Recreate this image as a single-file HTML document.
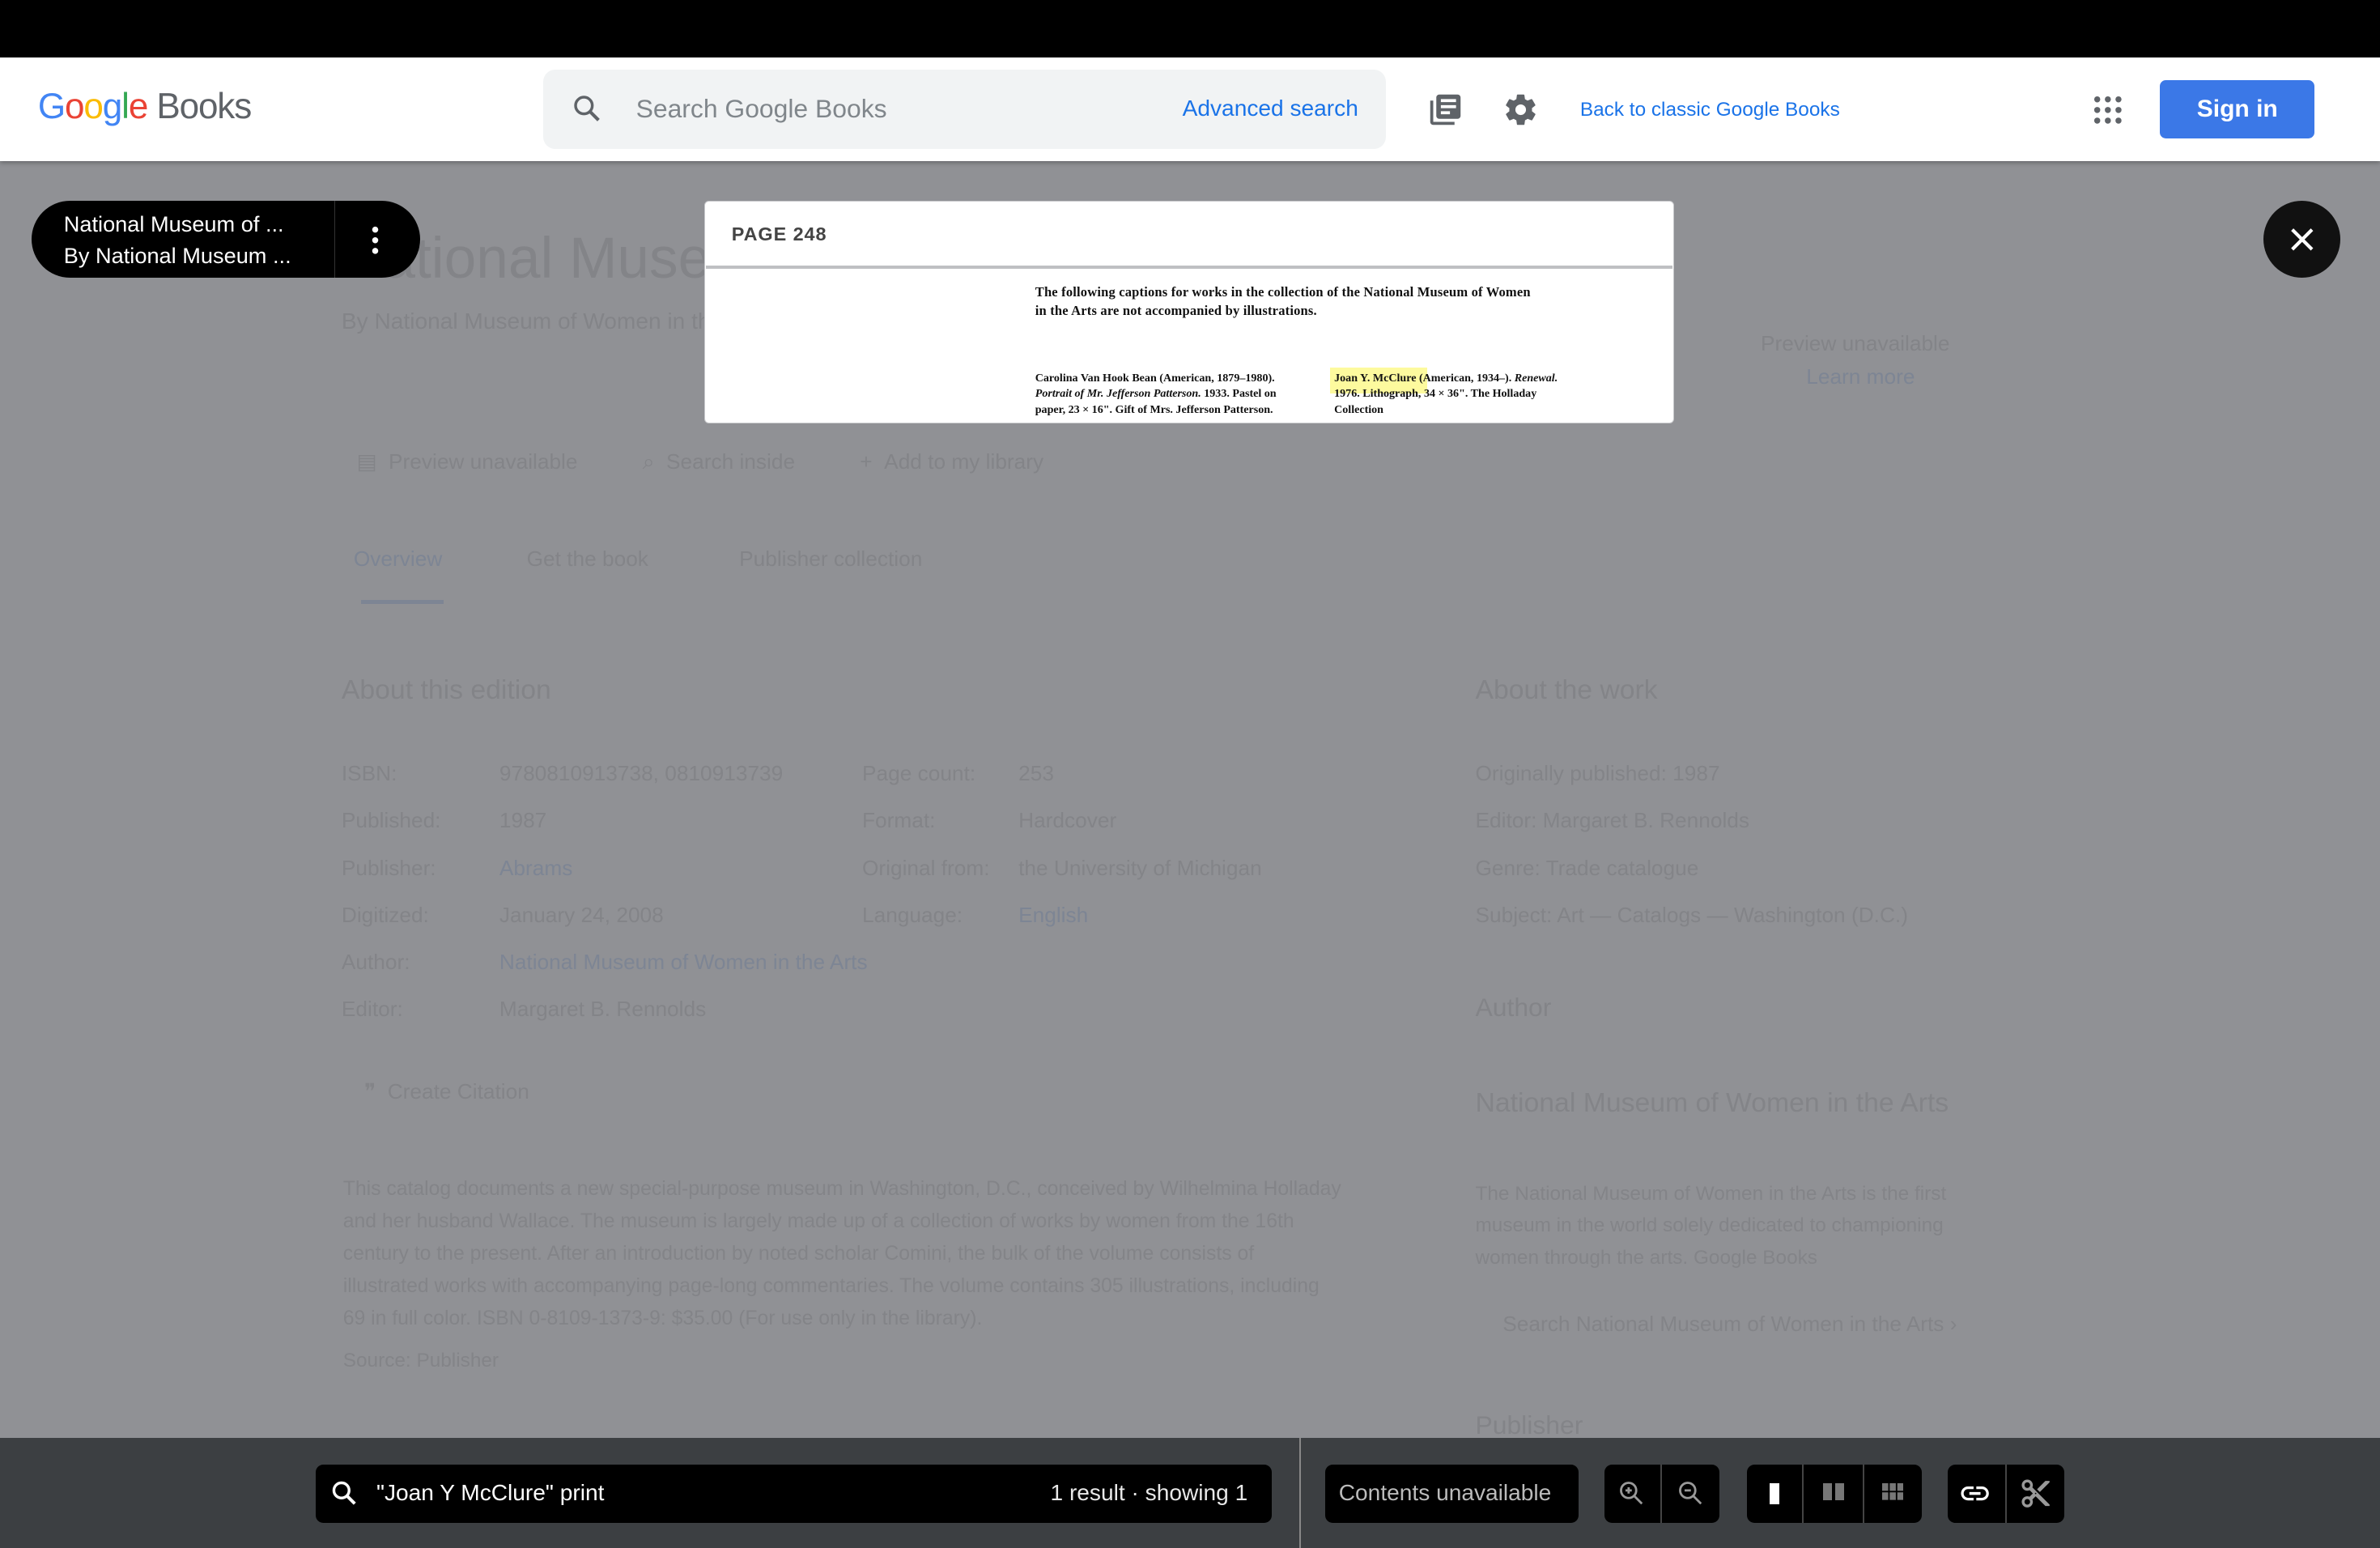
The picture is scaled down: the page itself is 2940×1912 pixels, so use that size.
<!DOCTYPE html>
<html><head><meta charset="utf-8"><style>
html,body{margin:0;padding:0;width:2940px;height:1912px;overflow:hidden;background:#909195}
#r{zoom:1.875;width:1568px;height:1020px;position:relative;font-family:"Liberation Sans",Arial,sans-serif}
.a{position:absolute;white-space:nowrap}
.bg{color:#838488}
.bl{color:#7d8594}
.pg{font-family:'Liberation Serif',serif;color:#111;font-weight:bold}
</style></head><body><div id="r">
<div class="a" style="left:0;top:0;width:1568px;height:38px;background:#000"></div>
<div class="a" style="left:0;top:38px;width:1568px;height:68px;background:#fff;box-shadow:0 1px 3px rgba(0,0,0,.3)"></div>
<div class="a" style="left:25px;top:57px;font-size:23.5px;letter-spacing:-0.6px"><span style="color:#4285f4">G</span><span style="color:#ea4335">o</span><span style="color:#fbbc05">o</span><span style="color:#4285f4">g</span><span style="color:#34a853">l</span><span style="color:#ea4335">e</span> <span style="color:#5f6368">Books</span></div>
<div class="a" style="left:358px;top:46px;width:555px;height:52px;background:#f1f3f4;border-radius:8px"></div>
<svg class="a" style="left:376px;top:61px" width="22" height="22" viewBox="0 0 24 24"><circle cx="9.5" cy="9.5" r="6" fill="none" stroke="#5f6368" stroke-width="2"/><path d="M14 14l6 6" stroke="#5f6368" stroke-width="2.4"/></svg>
<div class="a" style="left:419px;top:62px;font-size:17px;color:#80868b">Search Google Books</div>
<div class="a" style="left:779px;top:63px;font-size:15px;color:#1a73e8">Advanced search</div>
<svg class="a" style="left:940px;top:60px" width="24" height="24" viewBox="0 0 24 24"><path d="M4 6H2v14c0 1.1.9 2 2 2h14v-2H4V6zm16-4H8c-1.1 0-2 .9-2 2v12c0 1.1.9 2 2 2h12c1.1 0 2-.9 2-2V4c0-1.1-.9-2-2-2zm-1 9H9V9h10v2zm-4 4H9v-2h6v2zm4-8H9V5h10v2z" fill="#5f6368"/></svg>
<svg class="a" style="left:990px;top:60px" width="24" height="24" viewBox="0 0 24 24"><path d="M19.4 13c.04-.32.06-.66.06-1s-.02-.68-.07-1l2.1-1.650c.2-.15.24-.42.12-.64l-2-3.46c-.12-.22-.39-.3-.61-.22l-2.49 1c-.52-.4-1.080-.73-1.69-.98l-.38-2.65A.49.49 0 0 0 14 2h-4c-.25 0-.46.18-.49.42l-.38 2.65c-.61.25-1.17.59-1.69.98l-2.49-1c-.23-.09-.49 0-.61.22l-2 3.46c-.13.22-.07.49.12.64L4.57 11c-.04.32-.07.66-.07 1s.02.68.07 1l-2.11 1.65c-.19.15-.24.42-.12.64l2 3.46c.12.22.39.3.61.22l2.49-1c.52.4 1.08.73 1.69.98l.38 2.65c.03.24.24.42.49.42h4c.25 0 .46-.18.49-.42l.38-2.65c.61-.25 1.17-.59 1.69-.98l2.49 1c.23.09.49 0 .61-.22l2-3.46c.12-.22.07-.49-.12-.64L19.4 13zM12 15.5A3.5 3.5 0 1 1 12 8.5a3.5 3.5 0 0 1 0 7z" fill="#5f6368"/></svg>
<div class="a" style="left:1041px;top:65px;font-size:13px;color:#1a73e8">Back to classic Google Books</div>
<svg class="a" style="left:1379px;top:63px" width="19" height="19" viewBox="0 0 19 19" fill="#5f6368"><circle cx="2.5" cy="2.5" r="2"/><circle cx="9.5" cy="2.5" r="2"/><circle cx="16.5" cy="2.5" r="2"/><circle cx="2.5" cy="9.5" r="2"/><circle cx="9.5" cy="9.5" r="2"/><circle cx="16.5" cy="9.5" r="2"/><circle cx="2.5" cy="16.5" r="2"/><circle cx="9.5" cy="16.5" r="2"/><circle cx="16.5" cy="16.5" r="2"/></svg>
<div class="a" style="left:1423px;top:53px;width:102px;height:38px;background:#3b78e7;border-radius:4px;color:#fff;font-size:16px;font-weight:bold;text-align:center;line-height:38px">Sign in</div>

<div class="a bg" style="left:225px;top:148px;font-size:38px">National Museum of Women in the Arts</div>
<div class="a bg" style="left:225px;top:203px;font-size:15px">By National Museum of Women in the Arts</div>
<div class="a bg" style="left:1160px;top:218px;font-size:14px">Preview unavailable</div>
<div class="a bl" style="left:1190px;top:240px;font-size:14px">Learn more</div>
<div class="a bg" style="left:235px;top:296px;font-size:14px">▤ &nbsp;Preview unavailable &nbsp;&nbsp;&nbsp;&nbsp;&nbsp;&nbsp;&nbsp;&nbsp;&nbsp; ⌕ &nbsp;Search inside &nbsp;&nbsp;&nbsp;&nbsp;&nbsp;&nbsp;&nbsp;&nbsp;&nbsp; + &nbsp;Add to my library</div>
<div class="a bl" style="left:233px;top:360px;font-size:14px">Overview</div>
<div class="a" style="left:238px;top:395px;width:54px;height:3px;background:#7d8594"></div>
<div class="a bg" style="left:347px;top:360px;font-size:14px">Get the book</div>
<div class="a bg" style="left:487px;top:360px;font-size:14px">Publisher collection</div>
<div class="a bg" style="left:225px;top:444px;font-size:18px">About this edition</div>
<div class="a bg" style="left:972px;top:444px;font-size:18px">About the work</div>
<div class="a bg" style="left:225px;top:494px;font-size:14px;line-height:31px">ISBN:<br>Published:<br>Publisher:<br>Digitized:<br>Author:<br>Editor:</div>
<div class="a bg" style="left:329px;top:494px;font-size:14px;line-height:31px">9780810913738, 0810913739<br>1987<br><span class="bl">Abrams</span><br>January 24, 2008<br><span class="bl">National Museum of Women in the Arts</span><br>Margaret B. Rennolds</div>
<div class="a bg" style="left:568px;top:494px;font-size:14px;line-height:31px">Page count:<br>Format:<br>Original from:<br>Language:</div>
<div class="a bg" style="left:671px;top:494px;font-size:14px;line-height:31px">253<br>Hardcover<br>the University of Michigan<br><span class="bl">English</span></div>
<div class="a bg" style="left:972px;top:494px;font-size:14px;line-height:31px">Originally published: 1987<br>Editor: Margaret B. Rennolds<br>Genre: Trade catalogue<br>Subject: Art — Catalogs — Washington (D.C.)</div>
<div class="a bg" style="left:240px;top:711px;font-size:14px">❞ &nbsp;Create Citation</div>
<div class="a bg" style="left:972px;top:654px;font-size:17px">Author</div>
<div class="a bg" style="left:972px;top:716px;font-size:18px">National Museum of Women in the Arts</div>
<div class="a bg" style="left:972px;top:776px;font-size:13px;line-height:21px">The National Museum of Women in the Arts is the first<br>museum in the world solely dedicated to championing<br>women through the arts. Google Books</div>
<div class="a bg" style="left:990px;top:864px;font-size:14px">Search National Museum of Women in the Arts ›</div>
<div class="a bg" style="left:972px;top:929px;font-size:17px">Publisher</div>
<div class="a bg" style="left:226px;top:773px;font-size:13.2px;line-height:21.3px">This catalog documents a new special-purpose museum in Washington, D.C., conceived by Wilhelmina Holladay<br>and her husband Wallace. The museum is largely made up of a collection of works by women from the 16th<br>century to the present. After an introduction by noted scholar Comini, the bulk of the volume consists of<br>illustrated works with accompanying page-long commentaries. The volume contains 305 illustrations, including<br>69 in full color. ISBN 0-8109-1373-9: $35.00 (For use only in the library).</div>
<div class="a bg" style="left:226px;top:889px;font-size:13px">Source: Publisher</div>

<div class="a" style="left:21px;top:132px;width:256px;height:51px;background:#000;border-radius:26px"></div>
<div class="a" style="left:42px;top:137px;font-size:14.5px;color:#fff;line-height:21px">National Museum of ...<br>By National Museum ...</div>
<div class="a" style="left:220px;top:132px;width:1px;height:51px;background:#333"></div>
<svg class="a" style="left:243px;top:148px" width="8" height="20"><circle cx="4" cy="3" r="2" fill="#fff"/><circle cx="4" cy="10" r="2" fill="#fff"/><circle cx="4" cy="17" r="2" fill="#fff"/></svg>
<div class="a" style="left:1491px;top:132px;width:51px;height:51px;background:#111;border-radius:50%"></div>
<svg class="a" style="left:1507px;top:148px" width="19" height="19"><path d="M3 3l13 13M16 3L3 16" stroke="#fff" stroke-width="2.2"/></svg>

<div class="a" style="left:464px;top:132px;width:639px;height:147px;background:#fff;border:1px solid #c8c9cc;border-radius:3px;box-sizing:border-box"></div>
<div class="a" style="left:482px;top:147px;font-size:12.5px;font-weight:bold;color:#444;letter-spacing:0.5px">PAGE 248</div>
<div class="a" style="left:465px;top:175px;width:637px;height:2px;background:#bfc0c3"></div>
<div class="a pg" style="left:682px;top:186px;font-size:8.8px;line-height:12.5px;letter-spacing:0.1px">The following captions for works in the collection of the National Museum of Women<br>in the Arts are not accompanied by illustrations.</div>
<div class="a" style="left:876px;top:242px;width:64px;height:17px;background:#fdfa9e"></div>
<div class="a pg" style="left:682px;top:244px;font-size:7.5px;line-height:10.5px">Carolina Van Hook Bean (American, 1879–1980).<br><i>Portrait of Mr. Jefferson Patterson.</i> 1933. Pastel on<br>paper, 23 × 16". Gift of Mrs. Jefferson Patterson.</div>
<div class="a pg" style="left:879px;top:244px;font-size:7.5px;line-height:10.5px">Joan Y. McClure (American, 1934–). <i>Renewal.</i><br>1976. Lithograph, 34 × 36". The Holladay<br>Collection</div>

<div class="a" style="left:0;top:947px;width:1568px;height:73px;background:#3c3f42"></div>
<div class="a" style="left:856px;top:947px;width:1px;height:73px;background:#888"></div>
<div class="a" style="left:208px;top:965px;width:630px;height:38px;background:#000;border-radius:5px"></div>
<svg class="a" style="left:217px;top:974px" width="20" height="20" viewBox="0 0 24 24"><circle cx="9.5" cy="9.5" r="6" fill="none" stroke="#fff" stroke-width="2.2"/><path d="M14 14l6 6" stroke="#fff" stroke-width="2.6"/></svg>
<div class="a" style="left:248px;top:975px;font-size:15px;color:#fff">"Joan Y McClure" print</div>
<div class="a" style="left:692px;top:975px;font-size:15px;color:#e8e8e8">1 result · showing 1</div>
<div class="a" style="left:873px;top:965px;width:167px;height:38px;background:#000;border-radius:5px"></div>
<div class="a" style="left:882px;top:975px;font-size:15px;color:#bbb">Contents unavailable</div>
<div class="a" style="left:1057px;top:965px;width:76px;height:38px;background:#000;border-radius:5px"></div>
<div class="a" style="left:1094px;top:965px;width:1px;height:38px;background:#444"></div>
<svg class="a" style="left:1065px;top:974px" width="20" height="20" viewBox="0 0 24 24"><circle cx="9.5" cy="9.5" r="6" fill="none" stroke="#999" stroke-width="1.8"/><path d="M14 14l6 6M7 9.5h5M9.5 7v5" stroke="#999" stroke-width="1.8"/></svg>
<svg class="a" style="left:1104px;top:974px" width="20" height="20" viewBox="0 0 24 24"><circle cx="9.5" cy="9.5" r="6" fill="none" stroke="#999" stroke-width="1.8"/><path d="M14 14l6 6M7 9.5h5" stroke="#999" stroke-width="1.8"/></svg>
<div class="a" style="left:1151px;top:965px;width:115px;height:38px;background:#000;border-radius:5px"></div>
<div class="a" style="left:1187px;top:965px;width:1px;height:38px;background:#444"></div>
<div class="a" style="left:1227px;top:965px;width:1px;height:38px;background:#444"></div>
<div class="a" style="left:1166px;top:977px;width:6px;height:14px;background:#fff"></div>
<div class="a" style="left:1201px;top:977px;width:6px;height:11px;background:#777"></div><div class="a" style="left:1209px;top:977px;width:6px;height:11px;background:#777"></div>
<svg class="a" style="left:1240px;top:977px" width="14" height="12" fill="#777"><rect x="0" y="0" width="4" height="5"/><rect x="5" y="0" width="4" height="5"/><rect x="10" y="0" width="4" height="5"/><rect x="0" y="6" width="4" height="5"/><rect x="5" y="6" width="4" height="5"/><rect x="10" y="6" width="4" height="5"/></svg>
<div class="a" style="left:1283px;top:965px;width:77px;height:38px;background:#000;border-radius:5px"></div>
<div class="a" style="left:1321px;top:965px;width:1px;height:38px;background:#444"></div>
<svg class="a" style="left:1290px;top:973px" width="22" height="22" viewBox="0 0 24 24"><path d="M3.9 12c0-1.71 1.39-3.1 3.1-3.1h4V7H7c-2.76 0-5 2.24-5 5s2.24 5 5 5h4v-1.9H7c-1.710 0-3.1-1.39-3.1-3.1zM8 13h8v-2H8v2zm9-6h-4v1.9h4c1.71 0 3.1 1.39 3.1 3.1s-1.39 3.1-3.1 3.1h-4V17h4c2.76 0 5-2.240 5-5s-2.24-5-5-5z" fill="#fff"/></svg>
<svg class="a" style="left:1330px;top:973px" width="22" height="22" viewBox="0 0 24 24"><path d="M9.64 7.64c.23-.5.36-1.05.36-1.64 0-2.21-1.79-4-4-4S2 3.79 2 6s1.79 4 4 4c.59 0 1.14-.13 1.64-.36L10 12l-2.36 2.36C7.14 14.13 6.59 14 6 14c-2.21 0-4 1.79-4 4s1.79 4 4 4 4-1.79 4-4c0-.59-.13-1.14-.36-1.64L12 14l7 7h3v-1L9.64 7.64zM6 8c-1.1 0-2-.89-2-2s.9-2 2-2 2 .89 2 2-.9 2-2 2zm0 12c-1.1 0-2-.89-2-2s.9-2 2-2 2 .89 2 2-.9 2-2 2zm6-7.5c-.28 0-.5-.22-.5-.5s.22-.5.5-.5.5.22.5.5-.22.5-.5.5zM19 3l-6 6 2 2 7-7V3z" fill="#999"/></svg>
</div></body></html>
